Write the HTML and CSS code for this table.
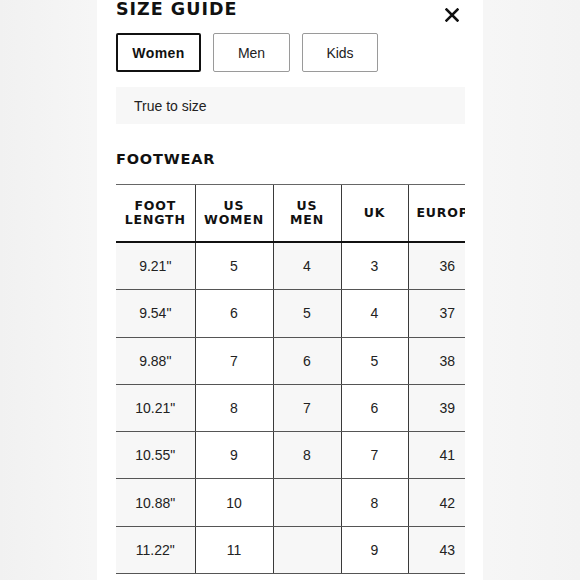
FILE: index.html
```html
<!DOCTYPE html>
<html>
<head>
<meta charset="utf-8">
<link rel="stylesheet" href="styles.css">
</head>
<body>
<div class="page">
  <div class="panel">
    <div class="head">
      <h1 class="title">SIZE GUIDE</h1>
      <button class="close" aria-label="Close">
        <svg width="14" height="14" viewBox="0 0 14 14"><path d="M1.5 1.5 L12.5 12.5 M12.5 1.5 L1.5 12.5" stroke="#111" stroke-width="2.5" stroke-linecap="square" fill="none"/></svg>
      </button>
    </div>
    <div class="tabs">
      <button class="tab tab-women active">Women</button>
      <button class="tab tab-men">Men</button>
      <button class="tab tab-kids">Kids</button>
    </div>
    <div class="fit">True to size</div>
    <h2 class="section">FOOTWEAR</h2>
    <div class="table-wrap">
      <table class="sizes">
        <colgroup>
          <col class="c1"><col class="c2"><col class="c3"><col class="c4"><col class="c5">
        </colgroup>
        <thead>
          <tr>
            <th>FOOT<br>LENGTH</th>
            <th>US<br>WOMEN</th>
            <th>US<br>MEN</th>
            <th>UK</th>
            <th>EUROPE</th>
          </tr>
        </thead>
        <tbody>
          <tr><td>9.21"</td><td>5</td><td>4</td><td>3</td><td>36</td></tr>
          <tr><td>9.54"</td><td>6</td><td>5</td><td>4</td><td>37</td></tr>
          <tr><td>9.88"</td><td>7</td><td>6</td><td>5</td><td>38</td></tr>
          <tr><td>10.21"</td><td>8</td><td>7</td><td>6</td><td>39</td></tr>
          <tr><td>10.55"</td><td>9</td><td>8</td><td>7</td><td>41</td></tr>
          <tr><td>10.88"</td><td>10</td><td></td><td>8</td><td>42</td></tr>
          <tr><td>11.22"</td><td>11</td><td></td><td>9</td><td>43</td></tr>
        </tbody>
      </table>
    </div>
  </div>
</div>
</body>
</html>
```
FILE: styles.css
```css
html, body {
  margin: 0;
  padding: 0;
  height: 100%;
}
body {
  background: linear-gradient(to right, #f1f1f1 0%, #f6f6f6 16%, #f6f6f6 84%, #f3f3f3 100%);
  font-family: "Liberation Sans", Arial, sans-serif;
  color: #1a1a1a;
  overflow: hidden;
}
.page {
  display: flex;
  justify-content: flex-start;
  height: 100%;
}
.panel {
  margin-left: 97px;
  width: 386px;
  background: #fff;
  padding: 0 18px 0 19px;
  box-sizing: border-box;
  height: 100%;
}
.head {
  display: flex;
  justify-content: space-between;
  align-items: flex-start;
  height: 33px;
}
.title {
  margin: 0;
  font-family: "DejaVu Sans", sans-serif;
  font-size: 17.5px;
  line-height: 18px;
  font-weight: 700;
  letter-spacing: 1px;
  color: #111;
}
.close {
  background: none;
  border: 0;
  padding: 0;
  margin: 8px 6px 0 0;
  width: 14px;
  height: 14px;
  display: flex;
}
.tabs {
  display: flex;
  gap: 12px;
}
.tab {
  height: 39px;
  box-sizing: border-box;
  background: #fff;
  border: 1px solid #9a9a9a;
  border-radius: 2px;
  font-family: "Liberation Sans", Arial, sans-serif;
  font-size: 14px;
  color: #222;
  padding: 0;
}
.tab-women { width: 85px; }
.tab-men { width: 77px; }
.tab-kids { width: 76px; }
.tab.active {
  border: 2px solid #111;
  font-weight: 700;
  letter-spacing: 0.4px;
  color: #111;
}
.fit {
  margin-top: 15px;
  height: 37px;
  background: #f7f7f7;
  display: flex;
  align-items: center;
  padding-left: 18px;
  font-size: 14px;
  color: #222;
}
.section {
  margin: 27px 0 0;
  font-family: "DejaVu Sans", sans-serif;
  font-size: 14.5px;
  line-height: 16px;
  font-weight: 700;
  letter-spacing: 0.8px;
  color: #111;
}
.table-wrap {
  margin-top: 17px;
  overflow: hidden;
  width: 349px;
}
.sizes {
  border-collapse: collapse;
  table-layout: fixed;
  width: 370px;
}
.c1 { width: 79px; }
.c2 { width: 78px; }
.c3 { width: 68px; }
.c4 { width: 67px; }
.c5 { width: 78px; }
.sizes th {
  height: 56px;
  padding: 0;
  font-family: "DejaVu Sans", sans-serif;
  font-size: 12.5px;
  line-height: 14.5px;
  font-weight: 700;
  letter-spacing: 0.8px;
  color: #111;
  text-align: center;
  border-left: 1.5px solid #3a3a3a;
  border-top: 1.5px solid #666;
  border-bottom: 2px solid #111;
  background: #fff;
}
.sizes td {
  height: 46.3px;
  padding: 0;
  font-size: 14px;
  color: #222;
  text-align: center;
  border-left: 1.5px solid #3a3a3a;
  border-bottom: 1.5px solid #555;
}
.sizes th:first-child, .sizes td:first-child {
  border-left: 0;
}
.sizes td:nth-child(odd) {
  background: #f7f7f7;
}
```
